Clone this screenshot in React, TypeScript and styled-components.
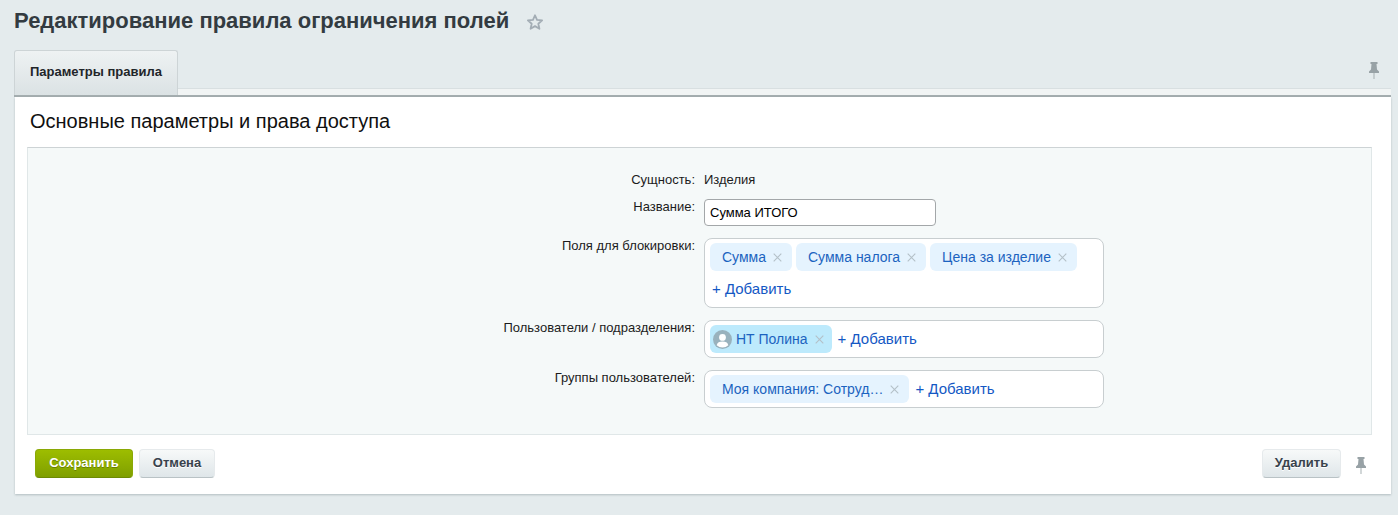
import React from 'react';
import styled, { createGlobalStyle } from 'styled-components';

const GlobalStyle = createGlobalStyle`
  html, body {
    margin: 0;
    padding: 0;
    height: 100%;
  }
  body {
    background-color: #e4ebed;
    font-family: "Liberation Sans", Arial, sans-serif;
    overflow: hidden;
  }
`;

const Page = styled.div`
  height: 515px;
  padding: 0 7px 0 14px;
  box-sizing: border-box;
`;

const TitleRow = styled.div`
  display: flex;
  align-items: center;
  height: 50px;
  padding-bottom: 8px;
  box-sizing: border-box;
`;

const Title = styled.h1`
  margin: 0;
  font-size: 22px;
  font-weight: bold;
  line-height: 40px;
  color: #333b41;
`;

const Star = styled.svg`
  width: 18px;
  height: 18px;
  margin-left: 17px;
  margin-top: 2px;
`;

const TabBar = styled.div`
  display: flex;
  justify-content: space-between;
  align-items: flex-start;
  height: 47px;
  box-sizing: border-box;
  border-bottom: 2px solid #a4adaf;
  box-shadow: inset 0 -6px 0 #f1f4f4, inset 0 -7px 0 #d8dfe1;
`;

const Tab = styled.div`
  box-sizing: border-box;
  width: 164px;
  height: 45px;
  padding-left: 15px;
  line-height: 41px;
  font-size: 13px;
  font-weight: bold;
  color: #1f2529;
  border: 1px solid #cdd4d6;
  border-bottom: none;
  border-radius: 3px 3px 0 0;
  background: linear-gradient(to bottom, #eef2f3, #dbe2e4);
`;

const Pin = styled.svg`
  width: 12px;
  height: 18px;
  flex: none;
`;

const TabPin = styled(Pin)`
  margin: 11px 11px 0 0;
`;

const Panel = styled.div`
  margin-left: 1px;
  background: #fff;
  height: 397px;
  box-sizing: border-box;
  padding: 0 19px 0 12px;
  box-shadow: 0 1px 2px rgba(120, 135, 140, 0.45);
`;

const SectionTitle = styled.h2`
  margin: 0;
  padding-left: 3px;
  height: 50px;
  line-height: 49px;
  font-size: 20px;
  font-weight: normal;
  color: #101010;
`;

const FormArea = styled.div`
  box-sizing: border-box;
  height: 288px;
  background: #f5f9f9;
  border: 1px solid #e0e7e8;
  border-top-color: #cdd3d5;
  padding-top: 24px;
`;

const FormGrid = styled.div`
  display: grid;
  grid-template-columns: 667px 1fr;
  column-gap: 9px;
  row-gap: 12px;
  font-size: 13px;
  color: #1c1c1c;
`;

const Label = styled.div`
  text-align: right;
  line-height: 15px;
`;

const PlainValue = styled.div`
  line-height: 15px;
  margin-bottom: -5px;
`;

const TextInput = styled.input`
  display: block;
  box-sizing: border-box;
  width: 232px;
  height: 27px;
  padding: 0 5px;
  border: 1px solid #a3a7a9;
  border-radius: 4px;
  background: #fff;
  font-family: inherit;
  font-size: 13px;
  color: #000;
  outline: none;
`;

const SelectorBox = styled.div`
  box-sizing: border-box;
  width: 400px;
  padding: 4px 5px;
  border: 1px solid #c8ced0;
  border-radius: 8px;
  background: #fff;
  display: flex;
  flex-wrap: wrap;
  align-items: center;
  gap: 4px;
  min-height: 38px;
`;

const Chip = styled.div<{ $user?: boolean }>`
  display: flex;
  align-items: center;
  height: 28px;
  box-sizing: border-box;
  padding: 0 ${props => (props.$user ? 8 : 10)}px 0 ${props => (props.$user ? 3 : 12)}px;
  border-radius: 6px;
  background: ${props => (props.$user ? '#bdeafc' : '#e5f3fe')};
  font-size: 14px;
  color: #1c63c0;
  white-space: nowrap;
`;

const ChipClose = styled.svg`
  width: 9px;
  height: 9px;
  margin-left: 7px;
  flex: none;
`;

const Avatar = styled.svg`
  width: 19px;
  height: 19px;
  margin-right: 4px;
  flex: none;
`;

const AddLink = styled.a<{ $full?: boolean }>`
  font-size: 15px;
  line-height: 28px;
  color: #1458c4;
  margin-left: 2px;
  ${props => props.$full && 'flex-basis: 100%;'}
`;

const Footer = styled.div`
  display: flex;
  align-items: center;
  height: 59px;
  padding: 0 5px 2px 8px;
  box-sizing: border-box;
  gap: 6px;
`;

const ActionButton = styled.button<{ $primary?: boolean; $width: number }>`
  box-sizing: border-box;
  width: ${props => props.$width}px;
  height: 29px;
  padding: 0 0 2px;
  border-radius: 4px;
  font-family: inherit;
  font-size: 13px;
  font-weight: bold;
  cursor: pointer;
  border: 1px solid ${props => (props.$primary ? '#8aa806' : '#e6eaec')};
  border-bottom-color: ${props => (props.$primary ? '#6c8a04' : '#b9c2c5')};
  color: ${props => (props.$primary ? '#fff' : '#39424c')};
  text-shadow: ${props => (props.$primary ? '0 1px 0 rgba(80,100,0,.6)' : '0 1px 0 #fff')};
  background: ${props =>
    props.$primary
      ? 'linear-gradient(to bottom, #9dbd00, #7f9f00)'
      : 'linear-gradient(to bottom, #f7f9f9, #dfe6e9)'};
`;

const FooterSpacer = styled.div`
  flex: 1;
`;

const FooterPin = styled(Pin)`
  margin: 3px 0 0 8px;
`;

const PinIcon = ({ as: Comp }: { as: typeof Pin }) => (
  <Comp viewBox="0 0 12 18">
    <path d="M2.500 1h7v2H8.500l.5 5.500 2 2V12H1v-1.500l2-2L3.500 3H2.500z" fill="#98a2a6" />
    <rect x="5.500" y="12" width="1" height="6" fill="#a6afb2" />
  </Comp>
);

const CloseIcon = () => (
  <ChipClose viewBox="0 0 9 9">
    <path d="M.7.700l7.600 7.600M8.300.700L.7 8.300" stroke="#b4c0c8" strokeWidth="1.100" fill="none" />
  </ChipClose>
);

const App: React.FC = () => (
  <Page>
    <GlobalStyle />
    <TitleRow>
      <Title>Редактирование правила ограничения полей</Title>
      <Star viewBox="0 0 24 24">
        <path
          d="M12 3l2.700 6.200 6.800.6-5.100 4.500 1.500 6.700L12 17.500 6.100 21l1.500-6.700L2.500 9.800l6.800-.6z"
          fill="none"
          stroke="#a3adb5"
          strokeWidth="2.400"
          strokeLinejoin="round"
        />
      </Star>
    </TitleRow>
    <TabBar>
      <Tab>Параметры правила</Tab>
      <PinIcon as={TabPin} />
    </TabBar>
    <Panel>
      <SectionTitle>Основные параметры и права доступа</SectionTitle>
      <FormArea>
        <FormGrid>
          <Label>Сущность:</Label>
          <PlainValue>Изделия</PlainValue>
          <Label>Название:</Label>
          <div>
            <TextInput defaultValue="Сумма ИТОГО" />
          </div>
          <Label>Поля для блокировки:</Label>
          <SelectorBox>
            <Chip>
              Сумма
              <CloseIcon />
            </Chip>
            <Chip>
              Сумма налога
              <CloseIcon />
            </Chip>
            <Chip>
              Цена за изделие
              <CloseIcon />
            </Chip>
            <AddLink $full>+ Добавить</AddLink>
          </SelectorBox>
          <Label>Пользователи / подразделения:</Label>
          <SelectorBox>
            <Chip $user>
              <Avatar viewBox="0 0 18 18">
                <circle cx="9" cy="9" r="9" fill="#99b2bd" />
                <circle cx="9" cy="7" r="3.200" fill="#fff" />
                <path d="M3.500 14.500c.5-2.500 2.500-3.500 5.500-3.500s5 1 5.500 3.500A8 8 0 0 1 3.500 14.500z" fill="#fff" />
              </Avatar>
              НТ Полина
              <CloseIcon />
            </Chip>
            <AddLink>+ Добавить</AddLink>
          </SelectorBox>
          <Label>Группы пользователей:</Label>
          <SelectorBox>
            <Chip>
              Моя компания: Сотруд…
              <CloseIcon />
            </Chip>
            <AddLink>+ Добавить</AddLink>
          </SelectorBox>
        </FormGrid>
      </FormArea>
      <Footer>
        <ActionButton $primary $width={98}>Сохранить</ActionButton>
        <ActionButton $width={76}>Отмена</ActionButton>
        <FooterSpacer />
        <ActionButton $width={79}>Удалить</ActionButton>
        <PinIcon as={FooterPin} />
      </Footer>
    </Panel>
  </Page>
);

export default App;
